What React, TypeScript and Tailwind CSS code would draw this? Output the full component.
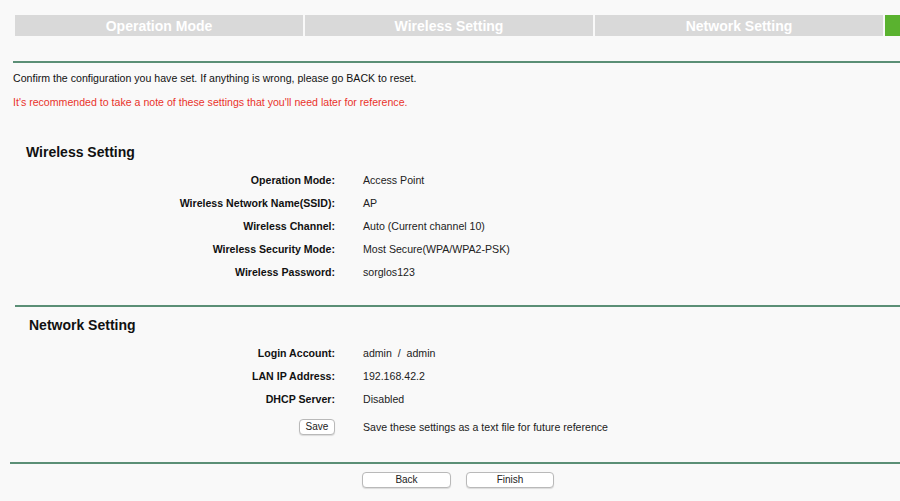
import React from 'react';

const steps = ['Operation Mode', 'Wireless Setting', 'Network Setting'];

const wireless: [string, string][] = [
  ['Operation Mode:', 'Access Point'],
  ['Wireless Network Name(SSID):', 'AP'],
  ['Wireless Channel:', 'Auto (Current channel 10)'],
  ['Wireless Security Mode:', 'Most Secure(WPA/WPA2-PSK)'],
  ['Wireless Password:', 'sorglos123'],
];

const network: [string, string][] = [
  ['Login Account:', 'admin  /  admin'],
  ['LAN IP Address:', '192.168.42.2'],
  ['DHCP Server:', 'Disabled'],
];

function Row({ label, value }: { label: string; value: string }) {
  return (
    <div className="flex h-[23px] items-center">
      <div className="w-[335px] shrink-0 text-right font-bold text-[#111]">{label}</div>
      <div className="ml-[28px] whitespace-pre text-[#222]">{value}</div>
    </div>
  );
}

function Button({ children, className }: { children: React.ReactNode; className: string }) {
  return (
    <button
      className={`flex h-[16px] items-center justify-center rounded-[4px] border border-[#b9b9b9] bg-white text-[10px] leading-none text-[#222] shadow-[0_1px_1px_rgba(0,0,0,0.12)] ${className}`}
    >
      {children}
    </button>
  );
}

export default function App() {
  return (
    <div className="h-[501px] w-[900px] overflow-hidden bg-[#f9f9f9] pt-[15px] font-['Liberation_Sans',Arial,sans-serif] text-[10.6px] leading-[16px]">
      {/* Step bar */}
      <div className="ml-[15px] flex h-[21px] gap-[2px]">
        {steps.map((s) => (
          <div
            key={s}
            className="flex w-[288px] shrink-0 items-center justify-center bg-[#d9d9d9] text-[14px] font-bold text-white"
          >
            {s}
          </div>
        ))}
        <div className="w-[40px] shrink-0 bg-[#5ab22f]" />
      </div>

      <div className="ml-[13px] mt-[25px] h-[2px] bg-[#5b8f76]" />

      <p className="ml-[13px] mt-[7px] text-[#111]">
        Confirm the configuration you have set. If anything is wrong, please go BACK to reset.
      </p>
      <p className="ml-[13px] mt-[8px] text-[#e9332b]">
        It's recommended to take a note of these settings that you'll need later for reference.
      </p>

      {/* Wireless section */}
      <h2 className="ml-[26px] mt-[32px] h-[20px] text-[14px] font-bold leading-[20px] text-[#111]">
        Wireless Setting
      </h2>
      <div className="mt-[6px]">
        {wireless.map(([l, v]) => (
          <Row key={l} label={l} value={v} />
        ))}
      </div>

      <div className="ml-[15px] mt-[22px] h-[2px] bg-[#5b8f76]" />

      {/* Network section */}
      <h2 className="ml-[29px] mt-[8px] h-[20px] text-[14px] font-bold leading-[20px] text-[#111]">
        Network Setting
      </h2>
      <div className="mt-[6px]">
        {network.map(([l, v]) => (
          <Row key={l} label={l} value={v} />
        ))}
        <div className="mt-[5px] flex h-[23px] items-center">
          <div className="flex w-[335px] shrink-0 justify-end">
            <Button className="w-[36px]">Save</Button>
          </div>
          <div className="ml-[28px] text-[#222]">Save these settings as a text file for future reference</div>
        </div>
      </div>

      <div className="ml-[10px] mt-[24px] h-[2px] bg-[#5b8f76]" />

      <div className="mt-[8px] flex gap-[15px] pl-[362px]">
        <Button className="w-[89px]">Back</Button>
        <Button className="w-[88px]">Finish</Button>
      </div>
    </div>
  );
}
